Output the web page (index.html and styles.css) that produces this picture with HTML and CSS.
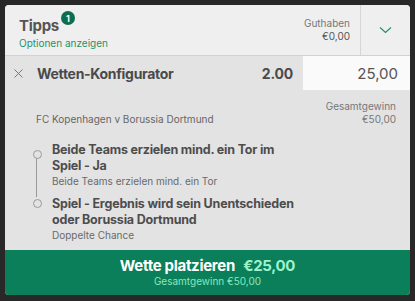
FILE: index.html
```html
<!DOCTYPE html>
<html lang="de">
<head>
<meta charset="utf-8">
<link rel="stylesheet" href="styles.css">
</head>
<body>
<div class="slip">
  <header class="head">
    <div class="head-main">
      <div class="title-row">
        <span class="title">Tipps</span>
        <span class="badge">1</span>
      </div>
      <a class="options">Optionen anzeigen</a>
    </div>
    <div class="balance">
      <span class="balance-label">Guthaben</span>
      <span class="balance-value">€0,00</span>
    </div>
    <button class="toggle" aria-label="Einklappen">
      <svg width="13" height="8" viewBox="0 0 13 8"><path d="M1 1.5 L6.5 6.5 L12 1.5" fill="none" stroke="#1f8f68" stroke-width="1.1"/></svg>
    </button>
  </header>

  <div class="bet-row">
    <span class="close">
      <svg width="9" height="9" viewBox="0 0 9 9"><path d="M0.5 0.5 L8.5 8.5 M8.5 0.5 L0.5 8.5" stroke="#777" stroke-width="1"/></svg>
    </span>
    <span class="bet-name">Wetten-Konfigurator</span>
    <span class="odds">2.00</span>
    <div class="stake">25,00</div>
  </div>

  <div class="content">
    <div class="match-row">
      <span class="match">FC Kopenhagen v Borussia Dortmund</span>
      <div class="win">
        <span>Gesamtgewinn</span>
        <span>€50,00</span>
      </div>
    </div>
    <ul class="legs">
      <li class="leg leg-first">
        <div class="leg-title">Beide Teams erzielen mind. ein Tor im Spiel - Ja</div>
        <div class="leg-sub">Beide Teams erzielen mind. ein Tor</div>
      </li>
      <li class="leg leg-last">
        <div class="leg-title">Spiel - Ergebnis wird sein Unentschieden oder Borussia Dortmund</div>
        <div class="leg-sub">Doppelte Chance</div>
      </li>
    </ul>
  </div>

  <button class="place">
    <span class="place-main">Wette platzieren <span class="place-amount">€25,00</span></span>
    <span class="place-sub">Gesamtgewinn €50,00</span>
  </button>
</div>
</body>
</html>
```

FILE: styles.css
```css
* { box-sizing: border-box; }
html, body { margin: 0; padding: 0; }
body {
  background: #282828;
  font-family: Inter, "Liberation Sans", sans-serif;
  width: 415px;
  height: 301px;
  padding: 5px 5px 0 5px;
}
.slip {
  width: 405px;
  height: 290px;
  background: #e3e3e3;
  border-radius: 4px;
  overflow: hidden;
  display: flex;
  flex-direction: column;
}
.head {
  height: 51px;
  background: #efefef;
  border-bottom: 1px solid #d2d2d2;
  display: flex;
}
.head-main {
  flex: 1;
  padding: 5px 0 0 14px;
}
.title-row { display: flex; align-items: flex-start; }
.title {
  font-size: 15px;
  font-weight: 700;
  letter-spacing: -0.3px;
  color: #555;
  margin-top: 6px;
}
.badge {
  width: 14px;
  height: 14px;
  border-radius: 50%;
  background: #0d6d4f;
  color: #fff;
  font-size: 9px;
  font-weight: 700;
  display: flex;
  align-items: center;
  justify-content: center;
  margin-left: 2px;
  margin-top: 1px;
}
.options {
  display: block;
  font-size: 10px;
  line-height: 14px;
  color: #1f9269;
  margin-top: 1px;
}
.balance {
  display: flex;
  flex-direction: column;
  align-items: flex-end;
  padding: 12px 10px 0 0;
  font-size: 10px;
  line-height: 13px;
  border-right: 1px solid #d6d6d6;
}
.balance-label { color: #777; }
.balance-value { color: #555; }
.toggle {
  width: 49px;
  border: 0;
  background: transparent;
  display: flex;
  align-items: center;
  justify-content: center;
  padding: 0;
}
.bet-row {
  height: 34px;
  display: flex;
  align-items: center;
}
.close {
  width: 32px;
  display: flex;
  padding-left: 9px;
}
.bet-name {
  flex: 1;
  font-size: 14px;
  font-weight: 700;
  letter-spacing: -0.3px;
  color: #4a4a4a;
}
.odds {
  font-size: 14px;
  font-weight: 700;
  letter-spacing: -0.2px;
  color: #4a4a4a;
  margin-right: 10px;
}
.stake {
  width: 107px;
  height: 100%;
  background: #fafafa;
  display: flex;
  align-items: center;
  justify-content: flex-end;
  padding-right: 12px;
  font-size: 15px;
  color: #555;
}
.content {
  flex: 1;
  padding: 10px 14px 0 31px;
}
.match-row {
  display: flex;
  align-items: flex-end;
  justify-content: space-between;
}
.match {
  font-size: 10px;
  color: #666;
  line-height: 13px;
}
.win {
  display: flex;
  flex-direction: column;
  align-items: flex-end;
  font-size: 10px;
  line-height: 13px;
  color: #777;
}
.legs {
  list-style: none;
  margin: 16px 0 0 0;
  padding: 0;
  position: relative;
}
.legs::before {
  content: "";
  position: absolute;
  left: 0;
  top: 15px;
  height: 40px;
  width: 1px;
  background: #9a9a9a;
}
.leg {
  position: relative;
  padding-left: 16px;
  margin-bottom: 8px;
}
.leg::before {
  content: "";
  position: absolute;
  left: -3px;
  width: 7px;
  height: 7px;
  border: 1px solid #9a9a9a;
  border-radius: 50%;
  background: #e3e3e3;
}
.leg-first::before { top: 8px; }
.leg-last::before { top: 3px; }
.leg-title {
  font-size: 12.5px;
  font-weight: 700;
  letter-spacing: -0.2px;
  color: #4d4d4d;
  line-height: 16px;
  width: 245px;
}
.leg-sub {
  font-size: 10px;
  color: #6a6a6a;
  line-height: 13px;
  margin-top: 1px;
}
.place {
  height: 45px;
  border: 0;
  background: #0a7f59;
  display: flex;
  flex-direction: column;
  align-items: center;
  justify-content: center;
  font-family: inherit;
  padding: 0;
}
.place-main {
  font-size: 15px;
  font-weight: 700;
  letter-spacing: -0.3px;
  color: #fff;
  line-height: 18px;
}
.place-amount { color: #9ef3cd; margin-left: 5px; }
.place-sub {
  font-size: 10px;
  color: #8ee6bf;
  line-height: 13px;
}
```
